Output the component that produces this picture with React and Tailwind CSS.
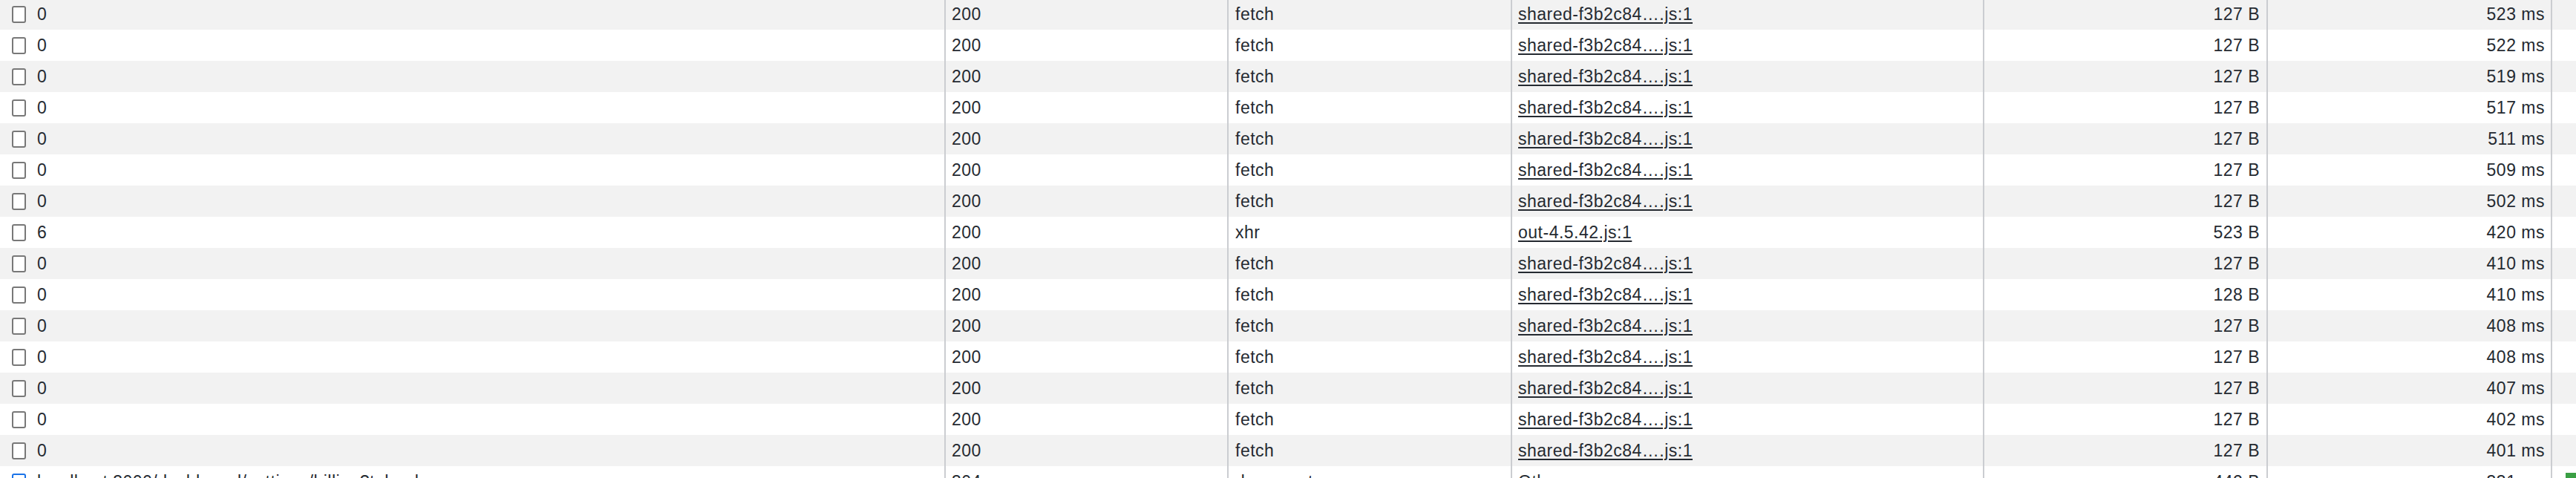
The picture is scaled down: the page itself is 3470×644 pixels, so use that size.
import React from "react";

const rows = [
  { name: "0", status: "200", type: "fetch", init: "shared-f3b2c84….js:1", size: "127 B", time: "523 ms" },
  { name: "0", status: "200", type: "fetch", init: "shared-f3b2c84….js:1", size: "127 B", time: "522 ms" },
  { name: "0", status: "200", type: "fetch", init: "shared-f3b2c84….js:1", size: "127 B", time: "519 ms" },
  { name: "0", status: "200", type: "fetch", init: "shared-f3b2c84….js:1", size: "127 B", time: "517 ms" },
  { name: "0", status: "200", type: "fetch", init: "shared-f3b2c84….js:1", size: "127 B", time: "511 ms" },
  { name: "0", status: "200", type: "fetch", init: "shared-f3b2c84….js:1", size: "127 B", time: "509 ms" },
  { name: "0", status: "200", type: "fetch", init: "shared-f3b2c84….js:1", size: "127 B", time: "502 ms" },
  { name: "6", status: "200", type: "xhr", init: "out-4.5.42.js:1", size: "523 B", time: "420 ms" },
  { name: "0", status: "200", type: "fetch", init: "shared-f3b2c84….js:1", size: "127 B", time: "410 ms" },
  { name: "0", status: "200", type: "fetch", init: "shared-f3b2c84….js:1", size: "128 B", time: "410 ms" },
  { name: "0", status: "200", type: "fetch", init: "shared-f3b2c84….js:1", size: "127 B", time: "408 ms" },
  { name: "0", status: "200", type: "fetch", init: "shared-f3b2c84….js:1", size: "127 B", time: "408 ms" },
  { name: "0", status: "200", type: "fetch", init: "shared-f3b2c84….js:1", size: "127 B", time: "407 ms" },
  { name: "0", status: "200", type: "fetch", init: "shared-f3b2c84….js:1", size: "127 B", time: "402 ms" },
  { name: "0", status: "200", type: "fetch", init: "shared-f3b2c84….js:1", size: "127 B", time: "401 ms" },
  { name: "localhost:3000/dashboard/settings/billing?tab=plan", status: "304", type: "document", init: "Other", size: "442 B", time: "331 ms", doc: true },
];

function Row({ r, i }) {
  const bg = i % 2 === 0 ? "bg-[#f2f2f2]" : "bg-white";
  return (
    <div className={`grid grid-cols-[1274px_381px_382px_636px_382px_383px_1fr] h-[42px] ${bg}`}>
      <div className="flex items-center border-r-2 border-[#cbcdd1] pl-4 min-w-0">
        <span
          className={`w-[19px] h-[23px] shrink-0 rounded-[3px] border-2 ${
            r.doc ? "border-[#1a73e8]" : "border-[#787878]"
          } bg-white`}
        />
        <span className="ml-[15px] whitespace-nowrap overflow-hidden">{r.name}</span>
      </div>
      <div className="flex items-center border-r-2 border-[#cbcdd1] pl-2">{r.status}</div>
      <div className="flex items-center border-r-2 border-[#cbcdd1] pl-[9px]">{r.type}</div>
      <div className="flex items-center border-r-2 border-[#cbcdd1] pl-2">
        {r.doc ? (
          <span>{r.init}</span>
        ) : (
          <span className="underline underline-offset-[3px] decoration-[1.5px]">{r.init}</span>
        )}
      </div>
      <div className="flex items-center justify-end border-r-2 border-[#cbcdd1] pr-[9px]">{r.size}</div>
      <div className="flex items-center justify-end border-r-2 border-[#cbcdd1] pr-2">{r.time}</div>
      <div className="relative">
        {r.doc && <span className="absolute left-[18px] top-[9px] w-[16px] h-[20px] bg-[#3a9f44]" />}
      </div>
    </div>
  );
}

export default function App() {
  return (
    <div className="w-[3470px] h-[644px] overflow-hidden bg-white font-['Liberation_Sans',Arial,sans-serif] text-[23px] tracking-[0.5px] text-[#252a31]">
      <div className="-mt-[2px]">
        {rows.map((r, i) => (
          <Row key={i} r={r} i={i} />
        ))}
      </div>
    </div>
  );
}
